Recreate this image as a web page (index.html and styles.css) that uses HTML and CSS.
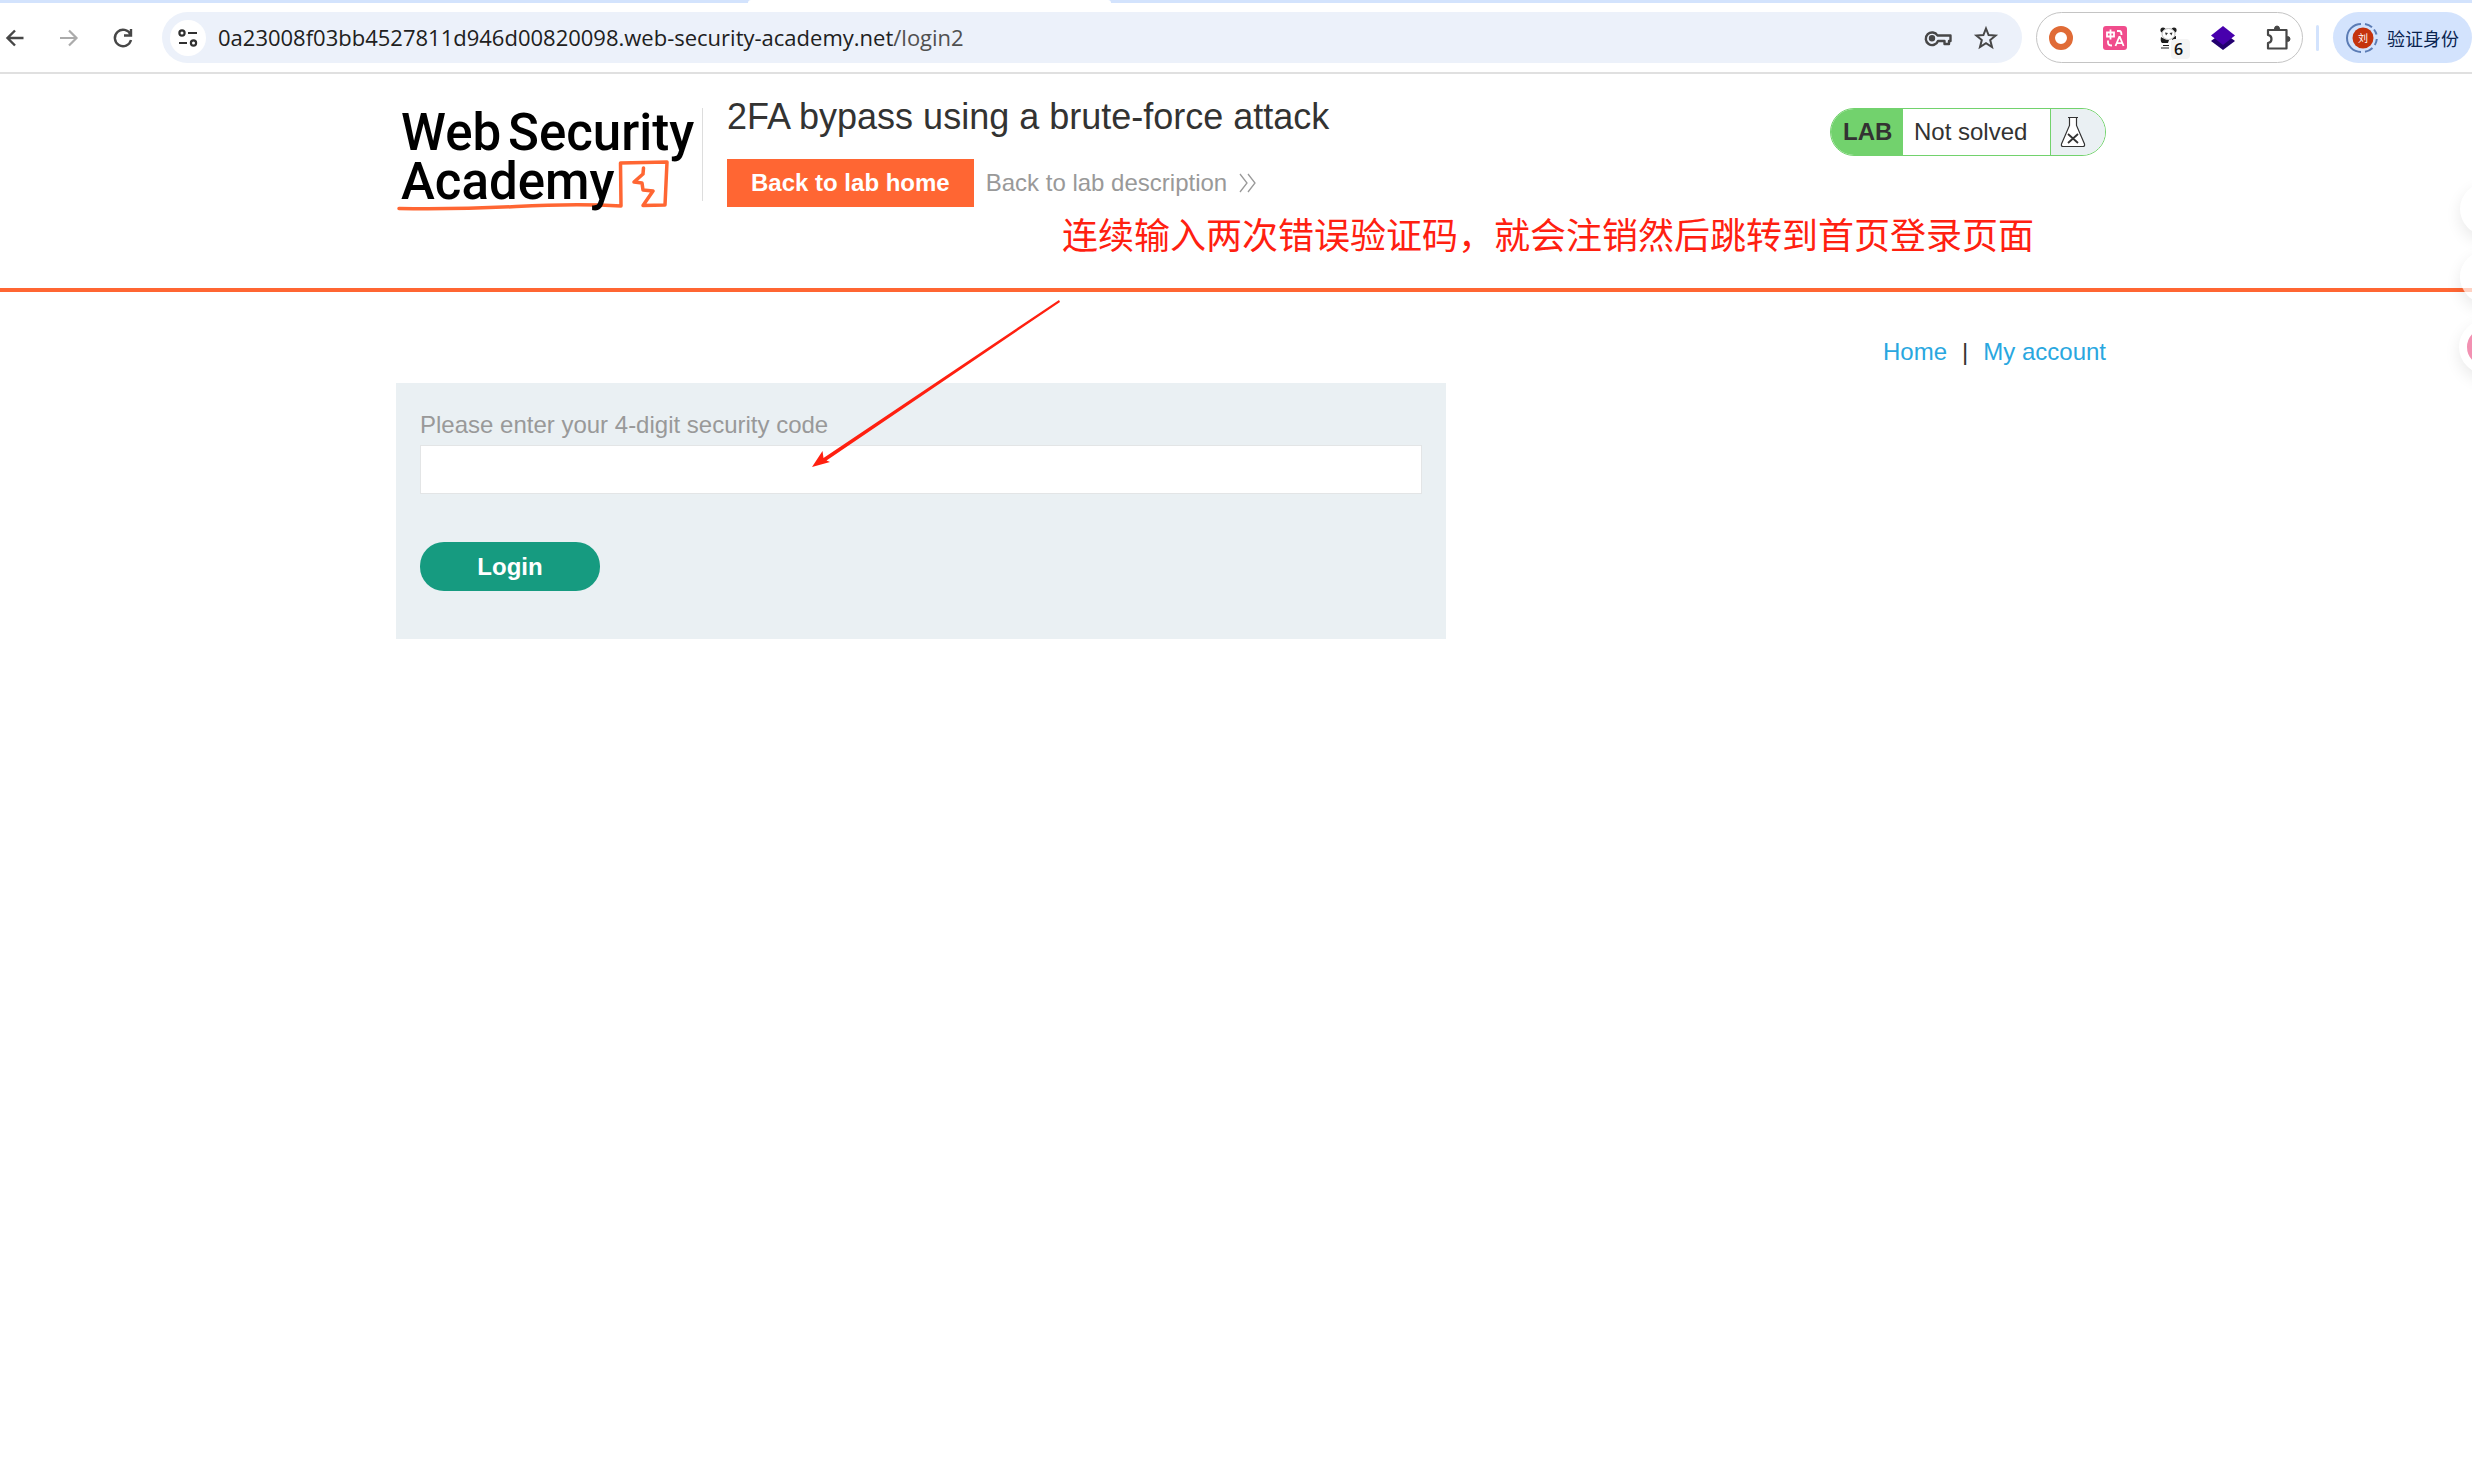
FILE: index.html
```html
<!DOCTYPE html>
<html lang="en">
<head>
<meta charset="utf-8">
<title>2FA bypass using a brute-force attack</title>
<link rel="stylesheet" href="styles.css">
</head>
<body>
<div class="browser">
  <div class="tabstrip"><span class="active-tab"></span></div>
  <div class="toolbar">
    <div class="nav-buttons">
      <button class="icon-button" aria-label="Back"><svg width="20" height="20" viewBox="0 0 20 20" fill="none" stroke="#474747" stroke-width="2.4"><path d="M18.500 10H3M10 2.500L2.500 10l7.500 7.500"/></svg></button>
      <button class="icon-button" aria-label="Forward"><svg width="20" height="20" viewBox="0 0 20 20" fill="none" stroke="#ababab" stroke-width="2.2"><path d="M1 10h16M10 2.500l7.500 7.500-7.500 7.500"/></svg></button>
      <button class="icon-button" aria-label="Reload"><svg width="20" height="20" viewBox="0 0 20 20" fill="none" stroke="#474747" stroke-width="2.400"><path d="M17.500 6.500A8.200 8.200 0 1 0 18 12M18 1v6.500h-7"/></svg></button>
    </div>
    <div class="omnibox">
      <button class="site-info" aria-label="Site information"><svg width="20" height="18" viewBox="0 0 20 18" fill="none" stroke="#303030" stroke-width="2.200"><circle cx="4" cy="4" r="2.600"/><path d="M10 4h9M1 14h8"/><circle cx="15.500" cy="14" r="2.600"/></svg></button>
      <span class="url">0a23008f03bb4527811d946d00820098.web-security-academy.net<span class="path">/login2</span></span>
      <svg class="key" width="28" height="20" viewBox="0 0 28 20" fill="none" stroke="#474747" stroke-width="2.400" stroke-linejoin="round"><path d="M13.500 7.500h13V13H25v3h-4.500v-3H14a6.300 6.300 0 1 1-.5-5.500z"/><circle cx="8" cy="10.200" r="2" fill="#474747"/></svg>
      <svg class="star" width="24" height="24" viewBox="0 0 24 24" fill="none" stroke="#474747" stroke-width="2"><path d="M12 2.500l2.600 6.600 7 .5-5.400 4.500 1.800 6.900-6-3.800-6 3.800 1.800-6.900-5.400-4.500 7-.5z"/></svg>
    </div>
    <div class="extensions">
      <svg width="24" height="24" viewBox="0 0 24 24"><circle cx="12" cy="12" r="9" fill="#fff" stroke="#e06b36" stroke-width="6"/></svg>
      <svg width="24" height="24" viewBox="0 0 24 24"><rect width="24" height="24" rx="3" fill="#f04d8c"/><g fill="none" stroke="#fff" stroke-width="1.800"><path d="M4 6.500h7v4H4zM7.500 3.500v10M14 5h2.500q2 0 2 4M5 14.500v2q0 3 4 3M12.500 20l3.800-9h.5l3.800 9M14 17.200h5"/></g></svg>
      <svg width="24" height="24" viewBox="0 0 24 24"><g fill="#202020"><circle cx="6" cy="4" r="2.600"/><circle cx="17" cy="4" r="2.600"/><path d="M4 11q4 3 8 3l-1 3H5q-2-2-1-6zM15 11l4-1v4l-4 1z"/><path d="M6 19h6v1H6zM4 21.500h8v1H4z"/></g><ellipse cx="11.500" cy="8" rx="6.500" ry="5.500" fill="#fff" stroke="#bbb"/><path d="M8 6.500l3 .5-2 2.500zM12.500 7l3-.5-1 3z" fill="#333"/><rect x="14" y="13" width="19" height="20" rx="4" fill="#f4f4f4"/><text x="21.500" y="29" class="count">6</text></svg>
      <svg width="24" height="24" viewBox="0 0 24 24"><path d="M0 15l4-3h16l4 3-12 9z" fill="#23006f"/><path d="M12 0l12 9.500-12 9.500L0 9.500z" fill="#4800ad"/></svg>
      <svg width="26" height="26" viewBox="0 0 26 26" fill="none" stroke="#474747" stroke-width="2.200" stroke-linejoin="round"><path d="M3 5h18.500v18.500H3v-5.500q3.500-.5 3.500-4t-3.500-4z"/><path d="M9.500 4q0-3 2.500-3t2.500 3zM22.500 11.500q2.500 0 2.500 2.500t-2.500 2.500z" fill="#474747" stroke-width="1"/></svg>
    </div>
    <span class="divider"></span>
    <button class="profile"><svg width="30" height="30" viewBox="0 0 30 30"><path d="M13 1A14 14 0 0 0 13 29M17 1a14 14 0 0 1 7 3.200M26 6.500a14 14 0 0 1 2.500 5M28.800 16a14 14 0 0 1-2 6M24.500 25a14 14 0 0 1-7.500 3.800" fill="none" stroke="#5b7cb5" stroke-width="2"/><circle cx="15" cy="15" r="10.500" fill="#c5330d"/><text x="15" y="19" class="avatar">刘</text></svg>验证身份</button>
  </div>
</div>
<header class="lab-header">
  <div class="container header-row">
    <a class="logo" href="#" aria-label="Web Security Academy">
      <svg width="302" height="108" viewBox="0 0 302 108">
        <g fill="none" stroke="#ff6633" stroke-linejoin="round" stroke-linecap="round"><path stroke-width="3.500" d="M3 100.500Q60 101.500 120 98.500T225 98L224.500 55 271 54 269 97 247 97.500 257 83 247 82 246 75 238 74 247 66 247.500 60"/></g>
        <text class="logo-text" x="5" y="42">Web</text><text class="logo-text" x="112" y="42">Security</text><text class="logo-text" x="5" y="91">Academy</text>
      </svg>
    </a>
    <div class="lab-title">
      <h1>2FA bypass using a brute-force attack</h1>
      <div class="lab-links">
        <a class="lab-home" href="#">Back to lab home</a>
        <a class="lab-description" href="#">Back to lab description<svg width="18" height="20" viewBox="0 0 18 20" fill="none" stroke="#999" stroke-width="1.300"><path d="M1 1l7 9-7 9M9 1l7 9-7 9"/></svg></a>
      </div>
    </div>
    <div class="status"><strong>LAB</strong><span class="state">Not solved</span><span class="flask"><svg width="26" height="32" viewBox="0 0 26 32" fill="#fff" stroke="#333" stroke-width="1.200"><path d="M9.500 1.500v8L1.500 28q-.5 2.500 1.500 2.500h20q2 0 1.500-2.500l-8-18.500v-8zM8 1.500h10"/><path d="M8 18l10 9M18 18L8 27" stroke-width="1.800"/></svg></span></div>
  </div>
</header>
<main class="container">
  <nav class="account-nav"><a href="#">Home</a><span>|</span><a href="#">My account</a></nav>
  <form class="login-form">
    <label for="code">Please enter your 4-digit security code</label>
    <input id="code" type="text">
    <button type="button">Login</button>
  </form>
</main>
<p class="note" lang="zh">连续输入两次错误验证码，就会注销然后跳转到首页登录页面</p>
<svg class="arrow" width="250" height="170" viewBox="0 0 250 170"><path d="M248 1L12.500 159 11.500 152 1 168 19 163 15.500 161.500 249 3z" fill="#ff2010"/></svg>
<span class="bubble bubble-first"></span>
<span class="bubble bubble-second"></span>
<span class="bubble bubble-third"></span>
</body>
</html>
```

FILE: styles.css
```css
* { box-sizing: border-box; }
body {
  position: relative;
  min-height: 100vh;
  margin: 0;
  overflow-x: hidden;
  background: #fff;
  color: #333332;
  font: 24px/28px "Liberation Sans", Arial, sans-serif;
}
a { text-decoration: none; }
svg { display: block; flex: none; overflow: visible; }
button { border: 0; font: inherit; }

/* Browser chrome */
.browser { border-bottom: 2px solid #e0e0e0; }
.tabstrip { height: 3px; padding-left: 748px; background: #d3e3fd; }
.active-tab { display: block; width: 363px; height: 3px; background: #fff; border-radius: 3px 3px 0 0; }
.toolbar { display: flex; align-items: center; height: 69px; }
.nav-buttons { display: flex; gap: 34px; padding-left: 5px; width: 162px; }
.icon-button { padding: 0; background: none; }
.omnibox {
  display: flex;
  align-items: center;
  flex: 1;
  height: 51px;
  padding: 0 24px 0 8px;
  border-radius: 26px;
  background: #ecf1fa;
}
.site-info {
  display: grid;
  place-items: center;
  width: 36px;
  height: 36px;
  padding: 0;
  border-radius: 50%;
  background: #fff;
}
.url { flex: 1; margin-left: 12px; padding-bottom: 2px; color: #202020; font: 22px/30px "Open Sans", sans-serif; white-space: nowrap; }
.path { color: #505050; }
.star { margin-left: 22px; }
.extensions {
  display: flex;
  align-items: center;
  gap: 30px;
  width: 267px;
  height: 51px;
  margin-left: 14px;
  padding: 0 10px 0 12px;
  border: 1px solid #c4c4c4;
  border-radius: 26px;
}
.count { font: 600 16px "Open Sans", sans-serif; text-anchor: middle; fill: #111; }
.avatar { font: 10px "Noto Sans CJK SC", sans-serif; text-anchor: middle; fill: #fff; }
.divider { width: 3px; height: 26px; margin: 0 14px 0 13px; border-radius: 2px; background: #d3e3fd; }
.profile {
  display: flex;
  align-items: center;
  gap: 9px;
  width: 139px;
  height: 51px;
  padding: 0 0 0 15px;
  border-radius: 26px;
  background: #d3e3fd;
  color: #0a2450;
  font: 18px/28px "Noto Sans CJK SC", sans-serif;
  white-space: nowrap;
}

/* Lab header */
.container { width: 1710px; max-width: 100%; margin: 0 auto; position: relative; left: 15px; }
.lab-header { border-bottom: 4px solid #ff6633; }
.header-row { display: flex; align-items: flex-start; padding: 34px 0 81px; }
.logo { padding-right: 4px; border-right: 1px solid #ddd; height: 93px; }
.logo-text { font: 500 51px Roboto, sans-serif; fill: #000; }
.lab-title { flex: 1; margin: -12px 0 0 24px; }
.lab-title h1 { margin: 0 0 21px; font-size: 36px; line-height: 42px; font-weight: 400; }
.lab-links { display: flex; align-items: center; gap: 12px; }
.lab-home { padding: 10px 24px; background: #ff6633; color: #fff; font-weight: 700; }
.lab-description { display: flex; align-items: center; gap: 12px; color: #999; }
.status {
  display: flex;
  width: 276px;
  height: 48px;
  overflow: hidden;
  border: 1px solid #72d26d;
  border-radius: 24px;
  line-height: 46px;
}
.status strong { width: 72px; padding-left: 12px; background: #72d26d; }
.state { flex: 1; padding-left: 11px; }
.flask { width: 55px; padding: 7px 9px; border-left: 1px solid #72d26d; background: #eaf0f3; }

/* Login */
.account-nav { display: flex; justify-content: flex-end; gap: 15px; padding: 46px 0 17px; }
.account-nav a { color: #29a7df; }
.login-form { width: 1050px; max-width: 100%; padding: 28px 24px 48px; background: #eaf0f3; }
.login-form label { display: block; color: #999; }
.login-form input {
  display: block;
  width: 100%;
  height: 49px;
  margin: 6px 0 48px;
  border: 1px solid #e3e5e6;
  background: #fff;
  font: inherit;
}
.login-form button {
  width: 180px;
  height: 49px;
  border-radius: 24px;
  background: #169b80;
  color: #fff;
  font-weight: 700;
}

/* Annotation and floating buttons */
.note {
  position: absolute;
  top: 206px;
  left: 1062px;
  margin: 0;
  color: #ff2010;
  font: 36px/54px "Noto Sans CJK SC", sans-serif;
  white-space: nowrap;
}
.arrow { position: absolute; top: 299px; left: 811px; }
.bubble {
  position: absolute;
  right: -40px;
  width: 52px;
  height: 52px;
  border-radius: 50%;
  background: rgba(255, 255, 255, .7);
  box-shadow: 0 6px 16px rgba(0, 0, 0, .09);
}
.bubble-first { top: 183px; background: #fff; }
.bubble-second { top: 251px; }
.bubble-third { top: 320px; right: -41px; width: 54px; height: 54px; border: 8px solid #fff; background: #f291b2; }
```
